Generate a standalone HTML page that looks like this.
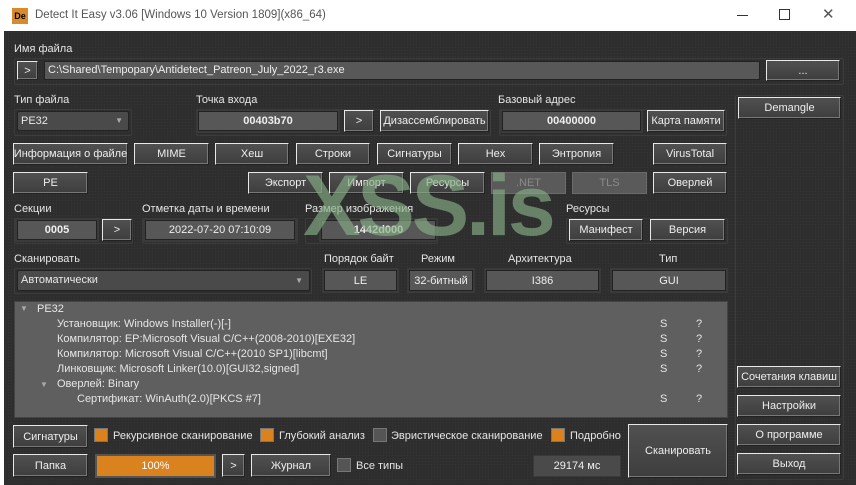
<!DOCTYPE html>
<html><head><meta charset="utf-8"><style>
*{box-sizing:border-box;margin:0;padding:0}
body{width:856px;height:485px;overflow:hidden;background:#fff;font-family:"Liberation Sans",sans-serif;font-size:11px;color:#e8e8e8;position:relative}
.a{position:absolute}
#win{position:absolute;left:4px;top:31px;width:852px;height:454px;background:#2e2e2e;background-image:radial-gradient(#363636 0.6px,transparent 0.7px);background-size:3px 3px}
.t{position:absolute;white-space:nowrap;color:#e6e6e6}
.b{position:absolute;background:linear-gradient(#505050,#3e3e3e);border:1px solid;border-color:#e8e8e8 #222 #222 #e8e8e8;box-shadow:inset -1px -1px 0 #777;color:#eee;text-align:center;display:flex;align-items:center;justify-content:center;white-space:nowrap}
.d{background:#5a5a5a;border-color:#6a6a6a;color:#8a8a8a;box-shadow:none}
.f{position:absolute;background:#575757;border:1px solid #222;color:#eee;display:flex;align-items:center;justify-content:center;white-space:nowrap;box-shadow:0 0 0 2px #3a3a3a}
.g{position:absolute;border:1px solid #3c3c3c;border-radius:2px}
.bold{font-weight:bold}
.cb{position:absolute;width:14px;height:14px;border:1px solid #777}
.o{background:#d9821e}.gr{background:#555}
</style></head><body>
<div class="a" style="left:0;top:0;width:856px;height:31px;background:#fff"></div>
<div class="a" style="left:12px;top:8px;width:16px;height:16px;background:#d98a2a;color:#000;font-size:9px;font-weight:bold;line-height:16px;text-align:center">De</div>
<div class="a" style="left:35px;top:9px;color:#555;font-size:11.5px">Detect It Easy v3.06 [Windows 10 Version 1809](x86_64)</div>
<div class="a" style="left:737px;top:15px;width:11px;height:1px;background:#333"></div>
<div class="a" style="left:779px;top:9px;width:11px;height:11px;border:1px solid #333"></div>
<div class="a" style="left:822px;top:5px;color:#555;font-size:15px">✕</div>
<div id="win"></div>
<div class="t" style="left:14px;top:43px">Имя файла</div>
<div class="g" style="left:14px;top:58px;width:830px;height:27px"></div>
<div class="b" style="left:17px;top:61px;width:21px;height:19px">&gt;</div>
<div class="a" style="left:44px;top:61px;width:716px;height:19px;background:#585858;border:1px solid #222;padding-left:3px;line-height:17px;color:#eee">C:\Shared\Tempopary\Antidetect_Patreon_July_2022_r3.exe</div>
<div class="b" style="left:766px;top:60px;width:74px;height:21px">...</div>

<div class="t" style="left:14px;top:94px">Тип файла</div>
<div class="g" style="left:14px;top:109px;width:118px;height:27px"></div>
<div class="a" style="left:17px;top:111px;width:112px;height:20px;background:#4a4a4a;border:1px solid #222;border-radius:2px;padding-left:3px;line-height:18px">PE32<span style="position:absolute;right:5px;top:0;font-size:8px;color:#aaa">▼</span></div>
<div class="t" style="left:196px;top:94px">Точка входа</div>
<div class="g" style="left:196px;top:109px;width:295px;height:27px"></div>
<div class="f bold" style="left:198px;top:111px;width:140px;height:20px">00403b70</div>
<div class="b" style="left:344px;top:110px;width:30px;height:22px">&gt;</div>
<div class="b" style="left:380px;top:110px;width:109px;height:22px">Дизассемблировать</div>
<div class="t" style="left:498px;top:94px">Базовый адрес</div>
<div class="g" style="left:499px;top:109px;width:228px;height:27px"></div>
<div class="f bold" style="left:502px;top:111px;width:139px;height:20px">00400000</div>
<div class="b" style="left:647px;top:110px;width:78px;height:22px">Карта памяти</div>

<div class="g" style="left:735px;top:95px;width:109px;height:385px"></div>
<div class="b" style="left:738px;top:97px;width:103px;height:22px">Demangle</div>

<div class="b" style="left:13px;top:143px;width:115px;height:22px">Информация о файле</div>
<div class="b" style="left:134px;top:143px;width:75px;height:22px">MIME</div>
<div class="b" style="left:215px;top:143px;width:74px;height:22px">Хеш</div>
<div class="b" style="left:296px;top:143px;width:74px;height:22px">Строки</div>
<div class="b" style="left:377px;top:143px;width:75px;height:22px">Сигнатуры</div>
<div class="b" style="left:458px;top:143px;width:75px;height:22px">Hex</div>
<div class="b" style="left:539px;top:143px;width:75px;height:22px">Энтропия</div>
<div class="b" style="left:653px;top:143px;width:74px;height:22px">VirusTotal</div>

<div class="b" style="left:13px;top:172px;width:75px;height:22px">PE</div>
<div class="b" style="left:248px;top:172px;width:75px;height:22px">Экспорт</div>
<div class="b" style="left:329px;top:172px;width:75px;height:22px">Импорт</div>
<div class="b" style="left:410px;top:172px;width:75px;height:22px">Ресурсы</div>
<div class="b d" style="left:491px;top:172px;width:75px;height:22px">.NET</div>
<div class="b d" style="left:572px;top:172px;width:75px;height:22px">TLS</div>
<div class="b" style="left:653px;top:172px;width:74px;height:22px">Оверлей</div>

<div class="t" style="left:14px;top:203px">Секции</div>
<div class="g" style="left:14px;top:218px;width:119px;height:26px"></div>
<div class="f bold" style="left:17px;top:220px;width:80px;height:20px">0005</div>
<div class="b" style="left:102px;top:219px;width:30px;height:22px">&gt;</div>
<div class="t" style="left:142px;top:203px">Отметка даты и времени</div>
<div class="g" style="left:142px;top:218px;width:156px;height:26px"></div>
<div class="f" style="left:145px;top:220px;width:150px;height:20px">2022-07-20 07:10:09</div>
<div class="t" style="left:305px;top:203px">Размер изображения</div>
<div class="g" style="left:305px;top:218px;width:133px;height:26px"></div>
<div class="f bold" style="left:321px;top:220px;width:115px;height:20px">1442d000</div>
<div class="t" style="left:566px;top:203px">Ресурсы</div>
<div class="g" style="left:566px;top:218px;width:162px;height:26px"></div>
<div class="b" style="left:569px;top:219px;width:74px;height:22px">Манифест</div>
<div class="b" style="left:650px;top:219px;width:75px;height:22px">Версия</div>

<div class="t" style="left:14px;top:253px">Сканировать</div>
<div class="g" style="left:14px;top:268px;width:298px;height:26px"></div>
<div class="a" style="left:17px;top:270px;width:293px;height:21px;background:#4a4a4a;border:1px solid #222;border-radius:2px;padding-left:3px;line-height:19px">Автоматически<span style="position:absolute;right:6px;top:0;font-size:8px;color:#aaa">▼</span></div>
<div class="t" style="left:324px;top:253px">Порядок байт</div>
<div class="f" style="left:324px;top:270px;width:73px;height:21px">LE</div>
<div class="t" style="left:421px;top:253px">Режим</div>
<div class="f" style="left:409px;top:270px;width:64px;height:21px">32-битный</div>
<div class="t" style="left:508px;top:253px">Архитектура</div>
<div class="f" style="left:486px;top:270px;width:113px;height:21px">I386</div>
<div class="t" style="left:659px;top:253px">Тип</div>
<div class="f" style="left:612px;top:270px;width:114px;height:21px">GUI</div>

<div class="a" style="left:14px;top:301px;width:714px;height:117px;background:#5f5f5f;border:1px solid #444"></div>
<div class="a" style="left:20px;top:304px;font-size:8px;color:#aaa">▼</div>
<div class="t" style="left:37px;top:303px">PE32</div>
<div class="t" style="left:57px;top:318px">Установщик: Windows Installer(-)[-]</div>
<div class="t" style="left:57px;top:333px">Компилятор: EP:Microsoft Visual C/C++(2008-2010)[EXE32]</div>
<div class="t" style="left:57px;top:348px">Компилятор: Microsoft Visual C/C++(2010 SP1)[libcmt]</div>
<div class="t" style="left:57px;top:363px">Линковщик: Microsoft Linker(10.0)[GUI32,signed]</div>
<div class="a" style="left:40px;top:380px;font-size:8px;color:#aaa">▼</div>
<div class="t" style="left:57px;top:378px">Оверлей: Binary</div>
<div class="t" style="left:77px;top:393px">Сертификат: WinAuth(2.0)[PKCS #7]</div>
<div class="t" style="left:660px;top:318px">S</div><div class="t" style="left:696px;top:318px">?</div>
<div class="t" style="left:660px;top:333px">S</div><div class="t" style="left:696px;top:333px">?</div>
<div class="t" style="left:660px;top:348px">S</div><div class="t" style="left:696px;top:348px">?</div>
<div class="t" style="left:660px;top:363px">S</div><div class="t" style="left:696px;top:363px">?</div>
<div class="t" style="left:660px;top:393px">S</div><div class="t" style="left:696px;top:393px">?</div>

<div class="b" style="left:13px;top:425px;width:75px;height:23px">Сигнатуры</div>
<div class="cb o" style="left:94px;top:428px"></div><div class="t" style="left:113px;top:430px">Рекурсивное сканирование</div>
<div class="cb o" style="left:260px;top:428px"></div><div class="t" style="left:279px;top:430px">Глубокий анализ</div>
<div class="cb gr" style="left:373px;top:428px"></div><div class="t" style="left:391px;top:430px">Эвристическое сканирование</div>
<div class="cb o" style="left:551px;top:428px"></div><div class="t" style="left:570px;top:430px">Подробно</div>
<div class="b" style="left:628px;top:424px;width:100px;height:54px">Сканировать</div>
<div class="b" style="left:13px;top:454px;width:75px;height:23px">Папка</div>
<div class="a" style="left:95px;top:454px;width:121px;height:24px;background:#d9821e;border:2px solid #555;text-align:center;line-height:20px;color:#fff">100%</div>
<div class="b" style="left:222px;top:454px;width:23px;height:23px">&gt;</div>
<div class="b" style="left:251px;top:454px;width:80px;height:23px">Журнал</div>
<div class="cb gr" style="left:337px;top:458px"></div><div class="t" style="left:356px;top:460px">Все типы</div>
<div class="f" style="left:533px;top:455px;width:88px;height:22px;box-shadow:none;border-color:#3a3a3a;background:#4a4a4a">29174 мс</div>

<div class="b" style="left:737px;top:366px;width:104px;height:22px">Сочетания клавиш</div>
<div class="b" style="left:737px;top:395px;width:104px;height:22px">Настройки</div>
<div class="b" style="left:737px;top:424px;width:104px;height:22px">О программе</div>
<div class="b" style="left:737px;top:453px;width:104px;height:22px">Выход</div>

<div class="a" style="left:303px;top:156px;font-size:86px;font-weight:bold;color:rgba(135,175,135,0.65);letter-spacing:-3px;line-height:100px">XSS.is</div>
</body></html>
